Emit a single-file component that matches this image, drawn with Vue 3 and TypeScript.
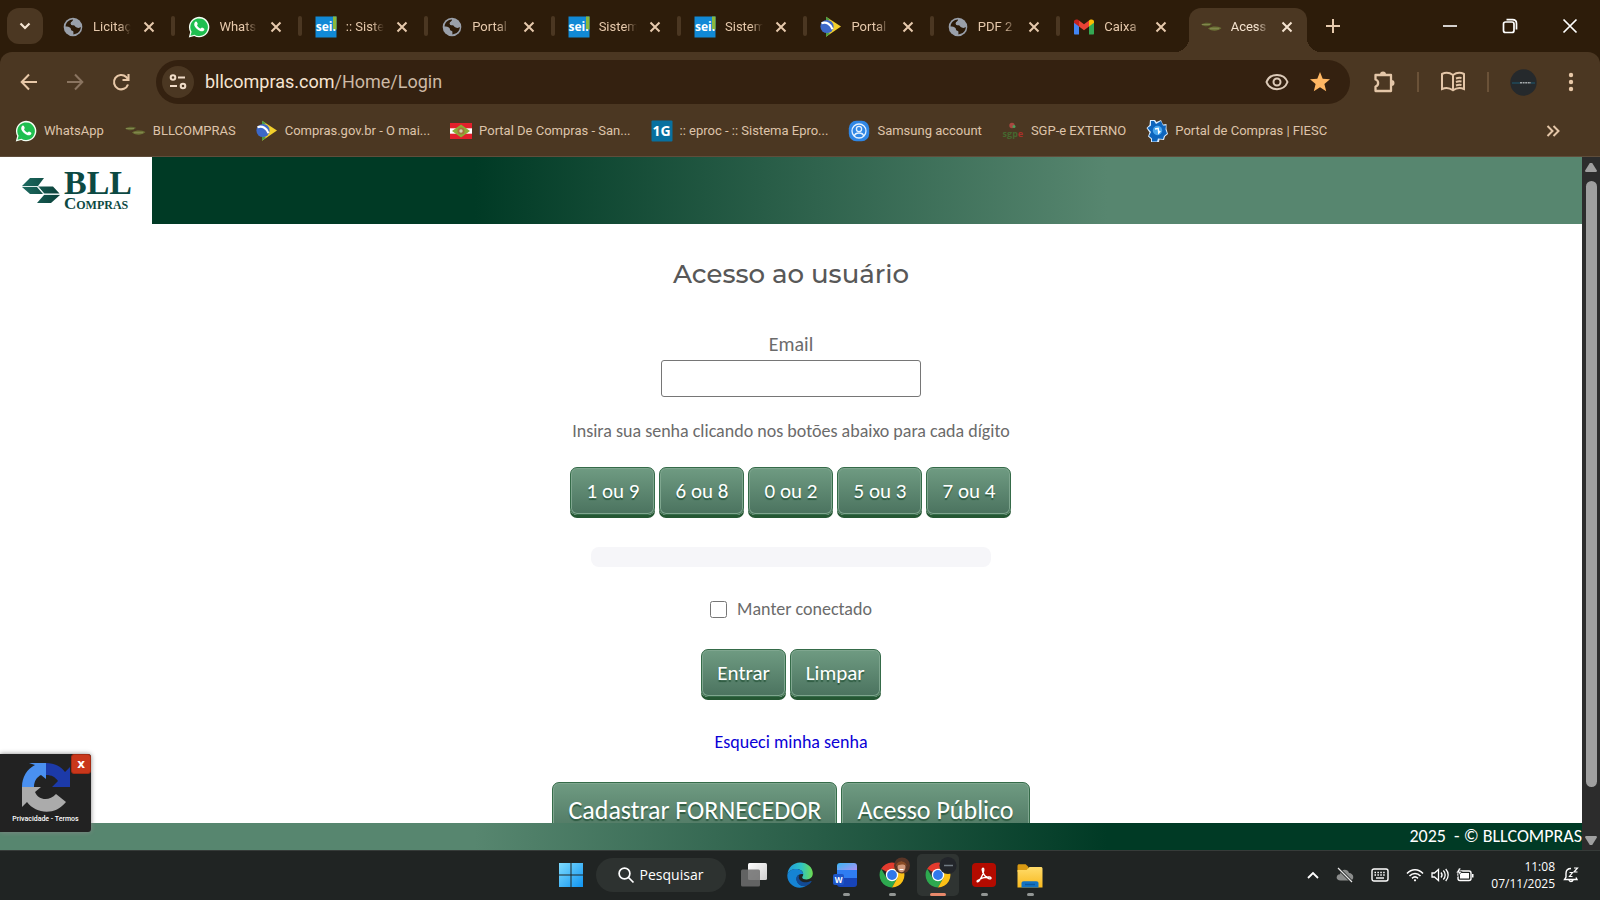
<script setup lang="ts">
import { ref } from 'vue'

interface Tab { icon: string; title: string; active?: boolean }
interface Bookmark { icon: string; label: string }
interface TaskApp { icon: string; label: string; running?: boolean; active?: boolean }

const tabs: Tab[] = [
  { icon: 'globe', title: 'Licitaç' },
  { icon: 'whats', title: 'Whats' },
  { icon: 'sei', title: ':: Siste' },
  { icon: 'globe', title: 'Portal' },
  { icon: 'sei', title: 'Sistem' },
  { icon: 'sei', title: 'Sistem' },
  { icon: 'gov', title: 'Portal' },
  { icon: 'globe', title: 'PDF 2' },
  { icon: 'gmail', title: 'Caixa' },
  { icon: 'leaf', title: 'Acess', active: true },
]

const bookmarks: Bookmark[] = [
  { icon: 'whats', label: 'WhatsApp' },
  { icon: 'leaf', label: 'BLLCOMPRAS' },
  { icon: 'gov', label: 'Compras.gov.br - O mai...' },
  { icon: 'flag', label: 'Portal De Compras - San...' },
  { icon: 'eproc', label: ':: eproc - :: Sistema Epro...' },
  { icon: 'samsung', label: 'Samsung account' },
  { icon: 'sgpe', label: 'SGP-e EXTERNO' },
  { icon: 'fiesc', label: 'Portal de Compras | FIESC' },
]

const apps: TaskApp[] = [
  { icon: 'taskview', label: 'Visão de tarefas' },
  { icon: 'edge', label: 'Edge' },
  { icon: 'word', label: 'Word', running: true },
  { icon: 'chrome-a', label: 'Chrome', running: true },
  { icon: 'chrome-b', label: 'Chrome', running: true, active: true },
  { icon: 'acrobat', label: 'Acrobat', running: true },
  { icon: 'folder', label: 'Explorador', running: true },
]

const letters: Record<string, string[]> = {
  sei: ['sei.'],
  eproc: ['1G'],
  sgpe: ['sgp', 'e'],
  word: ['W'],
}

const keys = ['1 ou 9', '6 ou 8', '0 ou 2', '5 ou 3', '7 ou 4']
const email = ref('')
const keep = ref(false)
const presses = ref<string[]>([])
function clearAll() {
  email.value = ''
  presses.value = []
}
</script>

<template>
  <div class="desktop">
    <svg class="sprite" aria-hidden="true">
      <defs>
        <linearGradient id="g-win" x1="0" y1="0" x2="1" y2="1"><stop offset="0" stop-color="#7fdcff" /><stop offset="1" stop-color="#0f94f0" /></linearGradient>
        <linearGradient id="g-edge" x1="0" y1="0" x2="1" y2="0"><stop offset="0" stop-color="#1f9ae0" /><stop offset=".55" stop-color="#2fc3c4" /><stop offset="1" stop-color="#6edc4f" /></linearGradient>
        <linearGradient id="g-word" x1="0" y1="0" x2="1" y2="1"><stop offset="0" stop-color="#38b6f5" /><stop offset="1" stop-color="#c08cf5" /></linearGradient>
        <linearGradient id="g-fold" x1="0" y1="0" x2="0" y2="1"><stop offset="0" stop-color="#ffdc6b" /><stop offset="1" stop-color="#f8b91e" /></linearGradient>
        <linearGradient id="g-view" x1="0" y1="0" x2="1" y2="1"><stop offset="0" stop-color="#ffffff" /><stop offset="1" stop-color="#cfcfcf" /></linearGradient>
        <linearGradient id="g-bll" x1="0" y1="0" x2="1" y2="0"><stop offset="0" stop-color="#1d6a60" /><stop offset="1" stop-color="#0a4039" /></linearGradient>
      </defs>
      <symbol id="globe" viewBox="0 0 22 22">
        <circle cx="11" cy="11" r="9.3" fill="#9aa0aa" />
        <path d="M3.600 10.500c2 .2 3.600.3 4.800 1.400 1 1 .2 2 1.200 2.700.8.500 1.800.3 1.800 1.500v2.300c4.400-.2 7.400-3.500 7.400-7.300-1.400 1.300-3 .8-4.600.1-1.300-.5-1.200-1.800-2.800-1.900-1.800 0-3-.8-2.600-2.400.4-1.300 2-.9 2.300-2.300L11 3.500C7 3.500 3.700 6.600 3.600 10.500z" fill="#2b1a08" />
        <path d="M8.900 6.500c.6-1.100 1.800-1 2.200-2.800 1.900 0 4.100.9 5.600 2.600-1.500.2-1.600 1.600-3.200 1.800-1.200.1-1.600 1-2.900 1-1.300 0-2.200-1.200-1.700-2.600z" fill="#9aa0aa" />
      </symbol>
      <symbol id="whats" viewBox="0 0 22 22">
        <path d="M.8 21.500l1.400-5.500A10.200 10.200 0 1 1 6.200 20z" fill="#f4fff4" />
        <path d="M2.500 19.800l1.100-4A8.800 8.800 0 1 1 6.500 18.700z" fill="#1fbf50" />
        <path d="M7.300 5.800c.5-.5 1.300-.4 1.600.2l.8 1.800c.2.500-.8 1.300-.6 1.700.7 1.400 1.800 2.400 3.200 3 .5.200 1.300-1.200 1.800-1l1.900.9c.8.500.2 1.900-.5 2.400-1.600 1.200-4 .3-5.900-1.200C7.500 12 6 9.800 6.200 8c.1-.9.500-1.700 1.100-2.200z" fill="#fff" />
      </symbol>
      <symbol id="sei" viewBox="0 0 22 22"><rect x=".5" y=".5" width="21" height="21" fill="#1189d6" /><rect x="18" y=".5" width="3.500" height="13" fill="#8bb83c" /></symbol>
      <symbol id="gov" viewBox="0 0 22 22">
        <path d="M6 .8L21 10.500 6 20.800z" fill="#f2cf2c" /><path d="M6 .8l4 2.500-4 2zM6 20.800l4-3-4-2z" fill="#4c9b48" />
        <circle cx="7" cy="10.500" r="6.600" fill="#3c68c8" /><path d="M1.500 7.200c5-1.700 9.500 1 11 6" fill="none" stroke="#fff" stroke-width="2.200" />
      </symbol>
      <symbol id="gmail" viewBox="0 0 22 22">
        <path d="M1 5v12.500c0 .6.400 1 1 1h4V9z" fill="#4285f4" /><path d="M21 5v12.500c0 .6-.4 1-1 1h-4V9z" fill="#34a853" />
        <path d="M6 10.500V4.500l5 3.800 5-3.800v6l-5 3.800z" fill="#ea4335" /><path d="M1 6.800V5.600C1 3.500 3.300 3 5 3.800l1 .7v6z" fill="#c5221f" /><path d="M21 6.800V5.600c0-2.100-2.300-2.600-4-1.800l-1 .7v6z" fill="#fbbc04" />
      </symbol>
      <symbol id="leaf" viewBox="0 0 22 22">
        <path d="M1 8.500c3-2 8-2.300 11-.7-2 2.700-7 3.500-11 .7z" fill="#5f6630" /><path d="M8 12.500c4-2.500 9-2.500 13.500-.5-4 3.500-9.500 3.500-13.500.5z" fill="#6c7236" />
        <path d="M2 8.600h8M10 12.700h9" stroke="#868a50" />
      </symbol>
      <symbol id="flag" viewBox="0 0 22 22">
        <path d="M0 3h22v16H0z" fill="#e3202b" /><path d="M0 8.300h22v5.400H0z" fill="#fff" /><path d="M11 4.500l9 6.500-9 6.500L2 11z" fill="#8cae36" /><circle cx="11" cy="11" r="3.600" fill="#a4763b" /><circle cx="11" cy="11" r="1.700" fill="#d8cfb0" />
      </symbol>
      <symbol id="eproc" viewBox="0 0 22 22"><rect x=".5" y=".5" width="21" height="21" rx="1" fill="#08709f" /></symbol>
      <symbol id="samsung" viewBox="0 0 22 22">
        <rect x=".8" y=".8" width="20.400" height="20.400" rx="7.500" fill="#2f86e4" /><g fill="none" stroke="#e3f1ff" stroke-width="1.300"><circle cx="11" cy="11" r="7" /><circle cx="11" cy="9" r="2.600" /><path d="M6.300 16c1-4 8.400-4 9.400 0" /></g>
      </symbol>
      <symbol id="sgpe" viewBox="0 0 22 22"><circle cx="10" cy="5.500" r="2.700" fill="#a84740" /><circle cx="12" cy="6.500" r="1.500" fill="#4ba05c" /></symbol>
      <symbol id="fiesc" viewBox="0 0 22 22">
        <path d="M4 0h5l1.500 2L15 0l2 4.500 3.500-.5 0 5 1.500 5-3 2.500L18 20l-4.500-.5-.5 2.500H5v-3l-3-2.500 1.500-4L.5 8l3-3z" fill="#d9ecff" />
        <path d="M5 1h3l2 3 5-3 2 4.500h3l-.5 4 1.500 4-3 2.500L17 19l-5-.5-1 3H6v-3l-3-2.500 2-4-3.500-4L5 5.500z" fill="#0e65bd" />
        <circle cx="11.500" cy="10.500" r="4.700" fill="#48a6ee" /><path d="M9 9l3.200-.7.5 4.700 1.600-2" fill="none" stroke="#fff" stroke-width="1.400" />
      </symbol>
      <symbol id="close" viewBox="0 0 12 12"><path d="M1.500 1.500l9 9M10.500 1.500l-9 9" stroke="currentColor" stroke-width="2" fill="none" /></symbol>
      <symbol id="taskview" viewBox="0 0 28 28"><rect x="8" y="2" width="19" height="17" rx="1.500" fill="url(#g-view)" /><rect x="1" y="8.500" width="19" height="17" rx="1.500" fill="#6e6e6e" fill-opacity=".85" /></symbol>
      <symbol id="edge" viewBox="0 0 28 28">
        <path d="M1.500 13C2 6.500 7.500 1.500 14 1.500c7.500 0 12.800 5 12.800 10.800 0 4-2.800 6.200-6.300 6.200-2.500 0-4.300-.8-4.300-2 0-.9 1-1.200 1-3.200 0-2.800-2.700-5.200-6.600-5.200C6 8.100 2.600 10.300 1.500 13z" fill="url(#g-edge)" />
        <path d="M1.300 14.500C1.500 10.500 5.600 8 10.200 8c4.300 0 7 2.500 7 5.300-1-.6-5.400-.6-6.500 3.200-1 3.800 2.500 9.200 9 8.500-1.700 1-3.700 1.700-6 1.700C6.600 26.700 1.300 21.200 1.300 14.500z" fill="#1584d4" />
        <path d="M10.800 15.500c-2 5 2.500 11 9.500 9.400 2-.7 4-2.300 5.300-4.300.3-.6-.2-.9-.8-.6-6 2.800-11.300.6-12-3.300-.1-.9.100-1.700.5-2.400-1 .1-2 .4-2.500 1.200z" fill="#124a94" />
      </symbol>
      <symbol id="word" viewBox="0 0 28 28">
        <path d="M8 2h14c2 0 3 1 3 3v7H5V5c0-2 1-3 3-3z" fill="url(#g-word)" /><rect x="5" y="9" width="20" height="9" fill="#2f7df2" /><path d="M5 17h20v6c0 2-1 3-3 3H8c-2 0-3-1-3-3z" fill="#1744b8" />
        <rect x="1" y="13" width="11" height="11" rx="2" fill="#1d56c8" />
      </symbol>
      <symbol id="chrome" viewBox="0 0 28 28">
        <path d="M14 14L3.200 7.800A12.500 12.500 0 0 1 24.800 7.800L14 7.800z" fill="#e33b2e" /><path d="M3.200 7.800A12.500 12.500 0 0 0 14 26.500l5.400-9.400L14 14 8.600 17.100z" fill="#2da94f" /><path d="M24.800 7.800A12.500 12.500 0 0 1 14 26.500l5.400-9.400L14 7.800z" fill="#fbc116" />
        <circle cx="14" cy="14" r="6.200" fill="#fff" /><circle cx="14" cy="14" r="4.900" fill="#3178ea" />
      </symbol>
      <symbol id="chrome-a" viewBox="0 0 28 28" overflow="visible"><use href="#chrome" width="28" height="28" /><circle cx="24" cy="4.500" r="8" fill="#5a3526" /><ellipse cx="23.500" cy="6" rx="4" ry="5.200" fill="#d49a7c" /><path d="M18 5c0-5 9-7 11 0-3-2-7-2-11 0z" fill="#8b4c26" /><path d="M21.500 8.500h4" stroke="#fff" /></symbol>
      <symbol id="chrome-b" viewBox="0 0 28 28" overflow="visible"><use href="#chrome" width="28" height="28" /><circle cx="24" cy="4.500" r="8.600" fill="#22252a" /><path d="M20 4.500h9" stroke="#707a82" stroke-width="1.500" /></symbol>
      <symbol id="acrobat" viewBox="0 0 28 28">
        <rect x="2" y="2" width="24" height="24" rx="4" fill="#b30b00" /><path d="M7.500 19.500c-1.200 1.300.6 2 1.800.2 2-3 4.300-8 4.500-11 0-2-1.600-2-1.600-.1.200 3.500 3.300 8 7 9.200 2.200.6 2.600-1.600.3-1.800-3.500-.3-8 .8-12 3.500z" fill="none" stroke="#fff" stroke-width="1.400" />
      </symbol>
      <symbol id="folder" viewBox="0 0 28 28">
        <path d="M1.500 5c0-1.100.6-1.700 1.700-1.700h6.500L12.500 6v5h-11z" fill="#d99a12" /><path d="M1.500 9h9l3-3h11.300c1.100 0 1.700.7 1.700 1.700v18.800h-25z" fill="url(#g-fold)" /><path d="M5.500 26.500v-4c0-1.500.8-2.300 2.300-2.300h12.400c1.500 0 2.300.8 2.300 2.300v4z" fill="#1272c4" /><path d="M9 23.500h10" stroke="#0a589f" stroke-width="1.400" />
      </symbol>
    </svg>

    <header class="browser">
      <div class="strip">
        <button class="menu" aria-label="Pesquisar guias"><svg width="14" height="14" viewBox="0 0 14 14"><path d="M2.500 4.500L7 9l4.500-4.500" fill="none" stroke="currentColor" stroke-width="2.200" /></svg></button>
        <div class="tabs">
          <div v-for="(t, i) in tabs" :key="i" class="cell">
            <div class="tab" :class="{ active: t.active }">
              <span class="fav" :class="t.icon"><svg><use :href="'#' + t.icon" /></svg><b v-if="letters[t.icon]">{{ letters[t.icon][0] }}</b></span>
              <span class="name">{{ t.title }}</span>
              <button class="x" aria-label="Fechar guia"><svg width="12" height="12"><use href="#close" /></svg></button>
            </div>
          </div>
        </div>
        <button class="plus" aria-label="Nova guia"><svg width="14" height="14"><path d="M7 0v14M0 7h14" stroke="currentColor" stroke-width="2" /></svg></button>
        <div class="window">
          <button aria-label="Minimizar"><svg width="16" height="16"><path d="M1 8h14" stroke="#fff" stroke-width="1.600" /></svg></button>
          <button aria-label="Restaurar"><svg width="16" height="16" fill="none" stroke="#fff" stroke-width="1.700"><rect x="1.500" y="4" width="10.500" height="10.500" rx="2" /><path d="M4.500 1.700h6c2.300 0 4 1.500 4 3.800v6" /></svg></button>
          <button aria-label="Fechar"><svg width="16" height="16"><path d="M1.500 1.500l13 13M14.500 1.500l-13 13" stroke="#fff" stroke-width="1.700" /></svg></button>
        </div>
      </div>

      <div class="toolbar">
        <nav class="nav">
          <button aria-label="Voltar"><svg width="18" height="18" fill="none" stroke="#e8c8a8" stroke-width="2"><path d="M17 9H2M9 1.500L1.700 9 9 16.500" /></svg></button>
          <button aria-label="Avançar"><svg width="18" height="18" fill="none" stroke="#8a7460" stroke-width="2"><path d="M1 9h15M9 1.500L16.300 9 9 16.500" /></svg></button>
          <button aria-label="Recarregar"><svg width="18" height="18" fill="none" stroke="#e8c8a8" stroke-width="2.100"><path d="M16 11.500A7.200 7.200 0 1 1 14.200 4L16 6" /><path d="M16.500 1v6h-6" /></svg></button>
        </nav>
        <div class="address">
          <button class="site" aria-label="Informações do site"><svg width="18" height="16" fill="none" stroke="#f0dcc8" stroke-width="2"><circle cx="4" cy="3.500" r="2.300" /><path d="M9 3.500h7M1 12h7" /><circle cx="14" cy="12" r="2.300" /></svg></button>
          <span class="url">bllcompras.com<i>/Home/Login</i></span>
          <button aria-label="Senhas"><svg width="24" height="18" fill="none" stroke="#dccab8" stroke-width="2"><path d="M1.500 9C5 -.5 19 -.5 22.500 9 19 18.500 5 18.500 1.500 9z" /><circle cx="12" cy="9" r="3.500" /></svg></button>
          <button aria-label="Favorito"><svg width="20" height="20" viewBox="0 0 20 20"><path d="M10 0l2.700 6.800 7.300.5-5.600 4.700 1.800 7.200L10 15.200l-6.200 4 1.800-7.200L0 7.300l7.300-.5z" fill="#ffb763" /></svg></button>
        </div>
        <div class="tools">
          <button aria-label="Extensões"><svg width="24" height="24"><path d="M3.500 5H19v16H3.500v-4.500c3.500-1 3.500-6 0-7z" fill="none" stroke="#e4c6a8" stroke-width="2.300" stroke-linejoin="round" /><path d="M8 4.500a3 3 0 0 1 6 0zM19.500 10a3 3 0 0 1 0 6z" fill="#e4c6a8" /></svg></button>
          <span class="bar"></span>
          <button aria-label="Modo de leitura"><svg width="26" height="22" fill="none" stroke="#e4c6a8" stroke-width="2"><path d="M13 4C9.500 1.500 5 1.500 2 3v15c3-1.300 7.500-1.300 11 1.300 3.500-2.600 8-2.600 11-1.300V3c-3-1.500-7.500-1.500-11 1zM13 4v15M16 7.500c2-.8 4-.8 5.500-.5M16 11c2-.8 4-.8 5.500-.5M16 14.500c2-.8 4-.8 5.500-.5" /></svg></button>
          <span class="bar"></span>
          <button aria-label="Perfil"><svg width="27" height="27"><circle cx="13.500" cy="13.500" r="13.200" fill="#25292c" /><path d="M2 14h8M21 14h4" stroke="#1f5a70" stroke-width="1.200" /><path d="M10 13.800h11" stroke="#a4aaac" stroke-width="1.600" stroke-dasharray="2 .6" /></svg></button>
          <button aria-label="Menu"><svg width="6" height="20" fill="#e8c8a8"><circle cx="3" cy="3" r="2.200" /><circle cx="3" cy="10" r="2.200" /><circle cx="3" cy="17" r="2.200" /></svg></button>
        </div>
      </div>

      <nav class="marks">
        <a v-for="b in bookmarks" :key="b.label" href="#" class="mark">
          <span class="fav" :class="b.icon"><svg><use :href="'#' + b.icon" /></svg><b v-if="letters[b.icon]">{{ letters[b.icon][0] }}<i v-if="letters[b.icon][1]">{{ letters[b.icon][1] }}</i></b></span>
          <span>{{ b.label }}</span>
        </a>
        <button class="more" aria-label="Mais favoritos"><svg width="14" height="12" fill="none" stroke="#e4c6a8" stroke-width="2"><path d="M1.500 1l5 5-5 5M7.500 1l5 5-5 5" /></svg></button>
      </nav>
    </header>

    <div class="viewport">
      <div class="page">
        <header class="banner">
          <a href="#" class="logo" aria-label="BLL Compras">
            <svg width="40" height="28" viewBox="0 0 40 28" fill="url(#g-bll)"><path d="M9 1h14l-6 8H1zM1 10h15l6 7H9zM17 9.500h15l6.500 7H23zM23 18h16l-9 8H16z" /><path d="M1 9.500h16l6.500 8H39" fill="none" stroke="#dfecea" /></svg>
            <span class="brand"><b>BLL</b><small>Compras</small></span>
          </a>
        </header>
        <main class="login">
          <h1>Acesso ao usuário</h1>
          <form @submit.prevent>
            <label class="mail" for="email">Email</label>
            <input id="email" v-model="email" class="box" type="email" />
            <p class="hint">Insira sua senha clicando nos botões abaixo para cada dígito</p>
            <div class="row">
              <button v-for="k in keys" :key="k" type="button" class="btn key" @click="presses.push(k)">{{ k }}</button>
            </div>
            <div class="typed"></div>
            <label class="keep"><input v-model="keep" type="checkbox" /><span>Manter conectado</span></label>
            <div class="row">
              <button type="submit" class="btn">Entrar</button>
              <button type="button" class="btn" @click="clearAll">Limpar</button>
            </div>
            <a href="#" class="forgot">Esqueci minha senha</a>
            <div class="row">
              <button type="button" class="btn big">Cadastrar FORNECEDOR</button>
              <button type="button" class="btn big">Acesso Público</button>
            </div>
          </form>
        </main>
        <footer class="foot">2025&nbsp; - © BLLCOMPRAS</footer>
        <aside class="captcha">
          <svg width="50" height="50" viewBox="0 0 50 50">
            <path d="M1 25C1 15 6 7 14 3L8 1h17v16l-5-4c-4 2-7 6-7 12z" fill="#4a90f0" /><path d="M25 1c9 0 15 3.500 19 9l5-5v20H31l6-6c-3-4-6-6-12-6z" fill="#1c3aa9" /><path d="M1 25h19l-6 5c3 8 14 10 21 2l10 8C34 54 15 52 6 40l-5 5z" fill="#ababab" />
          </svg>
          <p>Privacidade - Termos</p>
          <button aria-label="Fechar">x</button>
        </aside>
      </div>
      <div class="scroll"><i class="up"></i><i class="thumb"></i><i class="down"></i></div>
    </div>

    <footer class="taskbar">
      <span class="side"></span>
      <div class="center">
        <button class="app" aria-label="Iniciar"><svg width="26" height="26" fill="url(#g-win)"><path d="M1 1h11.500v11.500H1zM13.500 1H25v11.500H13.500zM1 13.500h11.500V25H1zM13.500 13.500H25V25H13.500z" /></svg></button>
        <button class="search"><svg width="16" height="16" fill="none" stroke="#fff" stroke-width="1.700"><circle cx="6.500" cy="6.500" r="5.400" /><path d="M10.500 10.500l5 5" /></svg>Pesquisar</button>
        <button v-for="(a, i) in apps" :key="i" class="app" :class="{ active: a.active, running: a.running }" :aria-label="a.label">
          <span class="glyph" :class="a.icon"><svg><use :href="'#' + a.icon" /></svg><b v-if="letters[a.icon]">{{ letters[a.icon][0] }}</b></span>
        </button>
      </div>
      <div class="side tray">
        <svg width="12" height="8" fill="none" stroke="#fff" stroke-width="1.800"><path d="M1 7l5-5 5 5" /></svg>
        <svg width="18" height="16"><path d="M4.500 13.500c-5 0-5-6-.5-6.300C4.500 1.500 12 1.500 13 6c5 0 6 7.500 1 7.500z" fill="#8b8d8c" /><path d="M2 1l14 14" stroke="#202423" stroke-width="3" /><path d="M2 1l14 14" stroke="#e8e8e8" stroke-width="1.300" /></svg>
        <svg width="18" height="14" fill="none" stroke="#fff" stroke-width="1.400"><rect x="1" y="1" width="16" height="12" rx="2" /><path d="M3.500 4.500h11M3.500 7h11" stroke-dasharray="1.500 1.400" /><path d="M5 10h8" /></svg>
        <span class="status">
          <svg width="18" height="14" fill="none" stroke="#fff" stroke-width="1.500"><path d="M1 5.500c4.500-5 11.500-5 16 0M3.500 8c3.200-3.500 7.800-3.500 11 0M6 10.400c1.800-1.800 4.200-1.800 6 0" /><circle cx="9" cy="12.300" r="1.100" fill="#fff" stroke="none" /></svg>
          <svg width="18" height="14" fill="none" stroke="#fff" stroke-width="1.300"><path d="M1 5h2.500L7.500 1.500v11L3.500 9H1z" /><path d="M10 4.500c1.300 1.500 1.300 3.500 0 5M12.300 2.500c2.500 2.500 2.500 6.500 0 9M14.700 1c3.300 3.500 3.300 8.500 0 12" /></svg>
          <svg width="18" height="14"><rect x="2" y="3" width="13" height="9.500" rx="2" fill="none" stroke="#fff" stroke-width="1.400" /><rect x="4" y="5" width="9" height="5.500" fill="#fff" /><path d="M16 6h1.500v3.500H16z" fill="#fff" /><path d="M3 0L0 5h3L1.500 9 6 3.500H3.500L5 0z" fill="#fff" stroke="#202423" stroke-width=".6" /></svg>
        </span>
        <time><span>11:08</span><span>07/11/2025</span></time>
        <svg width="16" height="16" fill="none" stroke="#fff" stroke-width="1.400"><path d="M8 1.500c-3 0-5 2-5 5V10l-1.500 2.500h12.500L13 10.500M6 13c.3 2 3.500 2 4 0" /><path d="M6.500 5.500h3l-3 4h3M11 1h3.500L11 5h3.500" stroke-width="1.200" /></svg>
      </div>
    </footer>
  </div>
</template>

<style>
body { margin: 0; }
</style>

<style scoped>
.desktop { height: 100vh; display: flex; flex-direction: column; overflow: hidden; font-family: "Open Sans", "Noto Sans", sans-serif; }
.desktop * { box-sizing: border-box; }
.sprite { position: absolute; width: 0; height: 0; }
svg { display: block; flex: none; overflow: visible; }
button { font: inherit; color: inherit; background: none; border: 0; padding: 0; display: flex; align-items: center; justify-content: center; }
a { text-decoration: none; }

.browser { background: #2d1c0a; color: #e6c9ac; }
.strip { height: 52px; display: flex; align-items: center; padding-left: 7px; }
.menu { width: 36px; height: 36px; border-radius: 12px; background: #4b3722; color: #f7e6d4; margin-right: 4px; }
.tabs { flex: 0 1 1264px; min-width: 0; height: 52px; display: flex; }
.cell { flex: 1 1 0; min-width: 0; display: flex; padding-top: 8px; position: relative; }
.cell:not(:nth-last-child(-n+2))::after { content: ""; position: absolute; right: -2px; top: 16px; width: 4px; height: 20px; border-radius: 2px; background: #4b3722; }
.tab { flex: 1; min-width: 0; height: 44px; display: flex; align-items: center; padding: 0 14px 7px 11px; margin: 0 4px; border-radius: 12px 12px 0 0; }
.tab.active { background: #4b3722; color: #f5e3d0; position: relative; }
.tab.active::before, .tab.active::after { content: ""; position: absolute; bottom: 0; width: 14px; height: 14px; }
.tab.active::before { left: -14px; background: radial-gradient(circle at 0 0, transparent 14px, #4b3722 14px); }
.tab.active::after { right: -14px; background: radial-gradient(circle at 100% 0, transparent 14px, #4b3722 14px); }
.fav, .glyph { position: relative; flex: none; width: 22px; height: 22px; }
.fav svg, .glyph svg { width: 100%; height: 100%; }
.fav b, .glyph b { position: absolute; left: 0; right: 0; top: 0; text-align: center; color: #fff; font-family: "Open Sans", sans-serif; font-weight: 700; font-size: 14px; line-height: 22px; }
.fav.sei b { font-size: 12px; }
.fav.sgpe b { font-size: 9px; line-height: 28px; color: #45672f; }
.fav.sgpe b i { font-style: normal; color: #a8302a; }
.name { flex: 1; min-width: 0; margin-left: 9px; overflow: hidden; white-space: nowrap; font-family: Roboto, sans-serif; font-size: 13px; line-height: 20px; -webkit-mask-image: linear-gradient(90deg, #000 26px, transparent 38px); mask-image: linear-gradient(90deg, #000 26px, transparent 38px); }
.x { margin-left: 6px; width: 12px; height: 20px; }
.plus { margin-left: 15px; width: 14px; height: 20px; }
.window { margin-left: auto; display: flex; padding-right: 22px; gap: 44px; }

.toolbar { height: 58px; background: #4b3722; border-radius: 12px 12px 0 0; display: flex; align-items: center; padding: 2px 26px 0 20px; }
.nav { display: flex; gap: 28px; margin-right: 26px; }
.address { flex: 1; height: 44px; border-radius: 22px; background: #342110; display: flex; align-items: center; padding: 0 20px 0 6px; gap: 21px; }
.site { width: 32px; height: 32px; border-radius: 16px; background: #4b3722; }
.url { flex: 1; margin-left: -10px; color: #f6e4d2; font-family: Roboto, sans-serif; font-size: 18px; line-height: 26px; }
.url i { font-style: normal; color: #ccb9a5; }
.tools { display: flex; align-items: center; margin-left: 22px; gap: 21px; }
.bar { width: 2px; height: 20px; background: #6b5238; }
.tools button:last-child { margin-left: 10px; }

.marks { height: 47px; background: #4b3722; border-bottom: 1px solid #5f4d3b; display: flex; align-items: center; gap: 20px; padding: 0 40px 4px 15px; }
.mark { display: flex; align-items: center; gap: 7px; color: #dec4aa; font-family: Roboto, sans-serif; font-size: 13px; line-height: 20px; white-space: nowrap; }
.more { margin-left: auto; }

.viewport { flex: 1; min-height: 0; display: flex; background: #fff; }
.page { flex: 1; min-width: 0; display: flex; flex-direction: column; position: relative; font-family: Carlito, Lato, sans-serif; color: #6b6b6b; }
.banner { flex: none; height: 67px; background: linear-gradient(90deg, #003a25 30%, #57866f 70%); display: flex; }
.logo { width: 152px; background: #fff; display: flex; align-items: center; padding-left: 21px; gap: 3px; }
.brand { display: flex; flex-direction: column; font-family: "Liberation Serif", serif; color: #0c4943; font-weight: 700; }
.brand b { font-size: 34px; line-height: 26px; }
.brand small { font-size: 17px; line-height: 15px; font-variant: small-caps; }
.login { flex: 1; min-height: 0; overflow: hidden; display: flex; flex-direction: column; align-items: center; padding-top: 32px; }
h1 { margin: 0; font-family: Montserrat, Inter, sans-serif; font-weight: 500; font-size: 26px; line-height: 36px; color: #585858; }
form { display: flex; flex-direction: column; align-items: center; flex: none; }
.mail { margin-top: 40px; font-size: 20px; line-height: 24px; }
.box { width: 260px; height: 37px; margin-top: 4px; border: 1px solid #767676; border-radius: 3px; background: #fff; font: inherit; padding: 0 8px; }
.hint { margin: 22px 0 24px; font-size: 18px; line-height: 24px; }
.row { display: flex; gap: 4px; }
.btn { height: 48px; margin-bottom: 4px; padding: 0 15px; border: 1px solid #356b49; border-radius: 7px; background: linear-gradient(#6f9b82, #4b735f); box-shadow: inset 0 0 0 1px #7fa68f, 0 3px 0 #245733; color: #fff; font-size: 21px; text-shadow: 0 2px 1px #2d5a40; white-space: nowrap; }
.key { width: 85px; padding: 0; }
.typed { width: 400px; height: 20px; margin: 28px 0 30px; border-radius: 8px; background: #f6f6f9; }
.keep { display: flex; align-items: center; gap: 10px; font-size: 18px; line-height: 24px; }
.keep input { width: 17px; height: 17px; margin: 0; }
.keep + .row { margin-top: 28px; }
.forgot { color: #0a00d6; font-size: 18px; line-height: 24px; margin: 29px 0 28px; }
.big { height: 56px; font-size: 26px; }
.foot { flex: none; height: 27px; background: linear-gradient(90deg, #57866f 30%, #003a25 70%); color: #fff; font-size: 18px; line-height: 27px; text-align: right; }
.captcha { position: absolute; left: 0; bottom: 18px; width: 91px; height: 78px; background: #222; border-radius: 0 3px 3px 0; box-shadow: 0 0 5px #888; padding-top: 8px; display: flex; flex-direction: column; align-items: center; }
.captcha p { margin: 0; color: #fff; font: 500 7px/14px Roboto, sans-serif; white-space: nowrap; }
.captcha button { position: absolute; right: 0; top: 0; width: 20px; height: 20px; border-radius: 3px; background: #c9371b; border: 1px solid #a52b13; color: #fff; font: 700 12px/16px "DejaVu Sans", sans-serif; }

.scroll { flex: none; width: 18px; background: #2c2c2c; display: flex; flex-direction: column; align-items: center; padding: 6px 0 5px; gap: 9px; }
.thumb { flex: 1; width: 11px; border-radius: 6px; background: #9f9f9f; margin-bottom: 40px; }
.up, .down { width: 12px; height: 9px; background: #9f9f9f; clip-path: polygon(40% 0, 60% 0, 100% 85%, 95% 100%, 5% 100%, 0 85%); }
.down { transform: rotate(180deg); }

.taskbar { flex: none; height: 50px; background: #202423; border-top: 1px solid #363b39; padding-bottom: 2px; display: flex; align-items: center; color: #fff; }
.side { flex: 1 1 0; padding: 0 21px; }
.center { display: flex; align-items: center; gap: 4px; }
.app { width: 42px; height: 42px; border-radius: 5px; position: relative; }
.app.active { background: #2f3432; }
.app.running::after { content: ""; position: absolute; left: 18px; bottom: 0; width: 7px; height: 3px; border-radius: 2px; background: #929694; }
.app.active::after { left: 13px; width: 16px; background: #e8896b; }
.glyph { width: 28px; height: 28px; }
.glyph b { left: 1px; right: 15px; top: 13px; font-size: 8px; line-height: 11px; }
.search { width: 130px; height: 34px; margin-right: 3px; border-radius: 17px; background: #2d3230; gap: 6px; font-size: 14px; }
.tray { display: flex; align-items: center; justify-content: flex-end; gap: 17px; }
.status { display: flex; gap: 7px; }
time { display: flex; flex-direction: column; align-items: flex-end; font-size: 12px; line-height: 17px; }
time + svg { margin-left: -9px; }
</style>
